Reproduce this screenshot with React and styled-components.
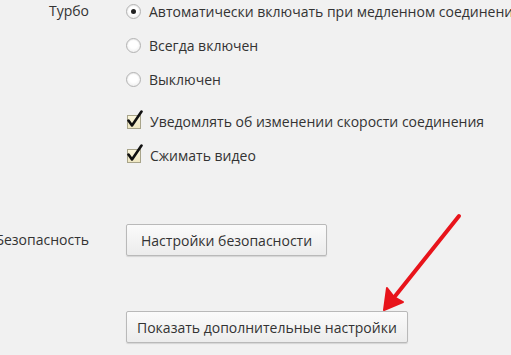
import React from "react";
import styled, { createGlobalStyle } from "styled-components";

const Global = createGlobalStyle`
  html, body { margin: 0; padding: 0; background: #f1f1f1; overflow: hidden; }
  body { font-family: "Open Sans", "Noto Sans", sans-serif; color: #333; }
`;

const Page = styled.div`
  position: relative;
  width: 511px;
  height: 355px;
  overflow: hidden;
`;

const Grid = styled.div`
  display: grid;
  grid-template-columns: 89px 1fr;
  column-gap: 37px;
  margin-top: -6px;
`;

const Label = styled.div`
  font-size: 14px;
  text-align: right;
  white-space: nowrap;
  height: ${(p) => p.$h || 34}px;
  line-height: ${(p) => p.$h || 34}px;
  margin-top: ${(p) => p.$mt || 0}px;
  direction: rtl;
  overflow: visible;
`;

const Options = styled.div`
  display: flex;
  flex-direction: column;
  min-width: 0;
`;

const Row = styled.label`
  display: flex;
  align-items: center;
  gap: 8px;
  height: 34px;
  font-size: 14px;
  white-space: nowrap;
  margin-top: ${(p) => p.$mt || 0}px;
`;

const Radio = styled.span`
  flex: none;
  width: 13px;
  height: 13px;
  border-radius: 50%;
  border: 1px solid #b3b3b3;
  background: radial-gradient(circle at 50% 40%, #ffffff 40%, #e6e6e6 100%);
  box-shadow: inset 0 1px 1px rgba(0, 0, 0, 0.08);
  display: flex;
  align-items: center;
  justify-content: center;
  margin-left: 0;
  &::after {
    content: "";
    display: ${(p) => (p.$on ? "block" : "none")};
    width: 5px;
    height: 5px;
    border-radius: 50%;
    background: #222;
  }
`;

const CheckWrap = styled.span`
  flex: none;
  width: 16px;
  height: 18px;
  position: relative;
  margin-top: -3px;
`;

const Box = styled.span`
  position: absolute;
  left: 1px;
  bottom: 0;
  width: 12px;
  height: 12px;
  border: 1px solid #a8a48a;
  background: linear-gradient(#fbf6dc, #efe7c2);
`;

const Check = () => (
  <svg width="17" height="19" viewBox="0 0 17 19" style={{ position: "absolute", left: 0, top: -1 }}>
    <path d="M2.5 10.5 L6 15.5 L15.5 1.5" fill="none" stroke="#111" strokeWidth="2.6" strokeLinecap="round" strokeLinejoin="round" />
  </svg>
);

const Button = styled.button`
  font-family: "Open Sans", "Noto Sans", sans-serif;
  font-size: 14px;
  color: #333;
  height: 32px;
  padding: 0 ${(p) => p.$px || 14}px;
  border: 1px solid #b9b9b9;
  border-radius: 2px;
  background: linear-gradient(#fbfbfb, #ececec);
  box-shadow: 0 1px 1px rgba(0, 0, 0, 0.12);
  margin-top: ${(p) => p.$mt || 0}px;
  justify-self: start;
  white-space: nowrap;
`;

const Arrow = styled.svg`
  position: absolute;
  left: 370px;
  top: 200px;
`;

export default function App() {
  return (
    <Page>
      <Global />
      <Grid>
        <Label>Турбо</Label>
        <Options>
          <Row>
            <Radio $on />
            Автоматически включать при медленном соединении
          </Row>
          <Row>
            <Radio />
            Всегда включен
          </Row>
          <Row>
            <Radio />
            Выключен
          </Row>
          <Row $mt={8}>
            <CheckWrap>
              <Box />
              <Check />
            </CheckWrap>
            Уведомлять об изменении скорости соединения
          </Row>
          <Row>
            <CheckWrap>
              <Box />
              <Check />
            </CheckWrap>
            Сжимать видео
          </Row>
        </Options>
        <Label $mt={52} $h={32}>Безопасность</Label>
        <div>
          <Button $mt={52}>Настройки безопасности</Button>
        </div>
        <div />
        <div>
          <Button $mt={55} $px={10}>Показать дополнительные настройки</Button>
        </div>
      </Grid>
      <Arrow width="100" height="120" viewBox="0 0 100 120">
        <path d="M89 16 L22 100" stroke="#e8141b" strokeWidth="4" strokeLinecap="round" fill="none" />
        <path d="M14 110 L17 88 L24 97 L33 102 Z" fill="#e8141b" stroke="#e8141b" strokeWidth="2" strokeLinejoin="round" />
      </Arrow>
    </Page>
  );
}
